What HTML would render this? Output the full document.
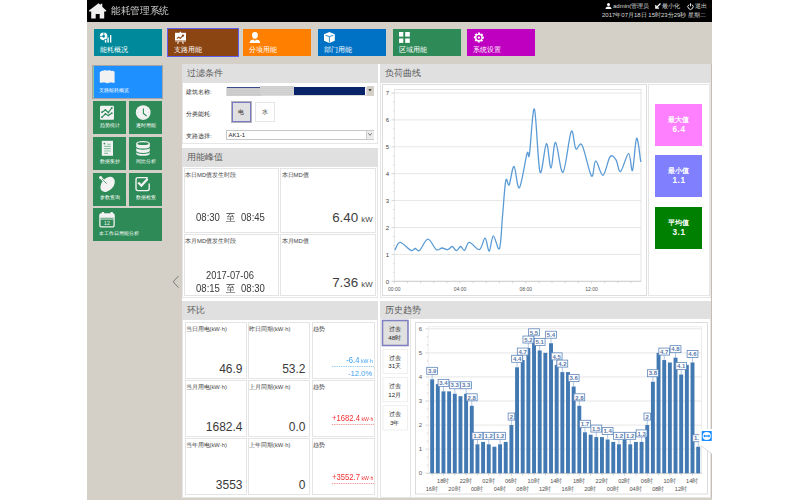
<!DOCTYPE html><html><head><meta charset="utf-8"><style>
*{margin:0;padding:0;box-sizing:border-box}
html,body{width:800px;height:500px;overflow:hidden;background:#fff}
body{font-family:"Liberation Sans",sans-serif;position:relative}
.a{position:absolute}
.t{position:absolute;white-space:nowrap;line-height:1}
.nav{position:absolute;top:29px;width:68px;height:27px}
.nav .t{color:#fff;font-size:7px;left:6px;top:17px}
.tile{position:absolute;width:33px;height:33px;background:#2e8b57}
.tile .t{color:#fff;font-size:5.3px;top:22.2px;left:6.6px}
.pan{position:absolute;background:#fff;border:1px solid #e6e6e6}
.ph{position:absolute;left:0;right:0;top:0;background:#e0e0e0;color:#555}
.ph .t{font-size:11px;left:4px;top:4px}
.card{position:absolute;border:1px solid #e4e4e4;background:#fff}
.lab{font-size:6px;color:#333}
</style></head><body>
<div class="a" style="left:87px;top:0;width:625px;height:500px;background:#d4d0c8"></div>
<div class="a" style="left:87px;top:0;width:625px;height:22px;background:#000"></div>
<svg class="a" style="left:80px;top:0" width="40" height="22" viewBox="80 0 40 22"><path d="M98.6 3.2 L100.6 5.1 V3.7 H102.3 V6.7 L106.2 10.6 Q106.6 11.6 105.6 11.6 H104.2 V18.4 H99.7 V13.9 H95.7 V18.4 H91.2 V11.6 H89.6 Q88.6 11.6 89 10.6 Z" fill="#f0f0f0"/></svg>
<div class="t" style="left:110.5px;top:6px;font-size:10px;transform:scaleX(0.965);transform-origin:0 0;color:#d0d0d0">能耗管理系统</div>
<svg class="a" style="left:605px;top:3px" width="7" height="6" viewBox="0 0 7 6"><circle cx="3.5" cy="1.6" r="1.5" fill="#fff"/><path d="M0.5 6 Q0.5 3.4 3.5 3.4 Q6.5 3.4 6.5 6Z" fill="#fff"/></svg>
<div class="t" style="left:613px;top:3px;font-size:6px;color:#ddd">admin(管理员</div>
<svg class="a" style="left:655px;top:3px" width="6" height="6" viewBox="0 0 6 6"><path d="M5.5 0.5 L1 5 M0.8 2 L0.8 5.2 L4 5.2" stroke="#fff" stroke-width="1.2" fill="none"/></svg>
<div class="t" style="left:662px;top:3px;font-size:6px;color:#ddd">最小化</div>
<svg class="a" style="left:687px;top:2.5px" width="7" height="7" viewBox="0 0 7 7"><path d="M2 1.6 A2.6 2.6 0 1 0 5 1.6" stroke="#fff" stroke-width="0.9" fill="none"/><path d="M3.5 0.3 V3.3" stroke="#fff" stroke-width="0.9"/></svg>
<div class="t" style="left:695px;top:3px;font-size:6px;color:#ddd">退出</div>
<div class="t" style="left:602px;top:11.5px;font-size:6px;color:#ddd">2017年07月18日 15时23分29秒 星期二</div>
<div class="nav" style="left:94px;background:#00899a"><div class="t">能耗概况</div></div>
<div class="a" style="left:167px;top:28px;width:72px;height:29px;border:1px solid #6060f0;background:#8b4513"></div>
<div class="nav" style="left:168px;background:#8b4513"><div class="t">支路用能</div></div>
<div class="nav" style="left:243px;background:#ff8000"><div class="t">分项用能</div></div>
<div class="nav" style="left:318px;background:#0072c6"><div class="t">部门用能</div></div>
<div class="nav" style="left:393px;background:#2e8b57"><div class="t">区域用能</div></div>
<div class="nav" style="left:467px;background:#c000c0"><div class="t">系统设置</div></div>
<svg class="a" style="left:0;top:0" width="800" height="60" viewBox="0 0 800 60"><circle cx="103.65" cy="36.3" r="2.6" stroke="#fff" stroke-width="2.5" fill="none"/><path d="M103.8 36.3 V32 M103.65 36.45 H99.4" stroke="#00899a" stroke-width="0.75"/><path d="M104.2 43 V39.3 H106.8 V36.8 H109.4 V43Z" fill="#00899a"/><rect x="104.85" y="39.9" width="1.5" height="2.7" fill="#fff"/><rect x="107.4" y="37.4" width="1.4" height="5.2" fill="#fff"/><rect x="110" y="35" width="1.3" height="7.6" fill="#fff"/><rect x="175" y="32.8" width="11" height="7.2" fill="#fff"/><path d="M179.4 32.9 L180.3 31.3 L181.3 32.9 Z" fill="#fff"/><rect x="175" y="40.3" width="11" height="1.2" fill="#fff" opacity="0.8"/><path d="M178.4 41.4 L177.7 43.8 M182.6 41.4 L183.3 43.8" stroke="#fff" stroke-width="1.2" opacity="0.85"/><path d="M176.9 38.6 L178.6 37.2 L180.3 38.3 L183 35.7" stroke="#8b4513" stroke-width="1.1" fill="none"/><circle cx="183" cy="35.6" r="1.15" fill="#8b4513"/><path d="M254.9 32 Q257.9 32 257.9 35 Q257.9 38.7 254.9 38.7 Q252 38.7 252 35 Q252 32 254.9 32Z" fill="#fff"/><path d="M249.7 43.1 Q249.7 40.2 252.6 39.8 L254.2 39.8 L254.9 41.4 L255.6 39.8 L257.2 39.8 Q260.1 40.2 260.1 43.1Z" fill="#fff"/><path d="M329.4 32 L334.8 34.2 V40.8 L329.4 42.9 L324 40.8 V34.2Z" fill="#fff"/><path d="M325.5 35.3 L329.4 36.6 L333.3 35.3 M329.4 36.6 V42.5" stroke="#0072c6" stroke-width="0.8" fill="none"/><rect x="399" y="32" width="4.3" height="4.6" fill="#fff"/><rect x="405.2" y="32" width="4.6" height="4.6" fill="#fff"/><rect x="399" y="38.5" width="4.3" height="4.4" fill="#fff"/><rect x="405.2" y="38.5" width="4.6" height="4.4" fill="#fff"/><path d="M483.90 36.59 L483.90 38.61 L482.51 39.08 L482.14 39.77 L483.15 40.42 L481.72 41.85 L480.40 41.20 L479.66 41.43 L479.91 42.60 L477.89 42.60 L477.42 41.21 L476.73 40.84 L476.08 41.85 L474.65 40.42 L475.30 39.10 L475.07 38.36 L473.90 38.61 L473.90 36.59 L475.29 36.12 L475.66 35.43 L474.65 34.78 L476.08 33.35 L477.40 34.00 L478.14 33.77 L477.89 32.60 L479.91 32.60 L480.38 33.99 L481.07 34.36 L481.72 33.35 L483.15 34.78 L482.50 36.10 L482.73 36.84Z" fill="#fff"/><circle cx="478.9" cy="37.6" r="1.85" stroke="#c000c0" stroke-width="1.3" fill="#fff"/></svg>
<div class="a" style="left:92.3px;top:64.5px;width:70.6px;height:34.8px;background:#8cc8a8;border:1px solid #a4a4a4"></div>
<div class="a" style="left:94px;top:66px;width:68px;height:32px;background:#1e90ff"></div>
<svg class="a" style="left:99.5px;top:70px" width="15" height="14" viewBox="0 0 15 14"><path d="M0.5 1.5 Q2 0.5 3.7 1 Q5.5 0 7.5 1 Q9.5 0 11.3 1 Q13 0.5 14.5 1.5 V13 Q13 12 11.3 12.6 Q9.5 12 7.5 13.3 Q5.5 12 3.7 12.6 Q2 12 0.5 13Z" fill="#eee"/></svg>
<div class="t" style="left:99px;top:88px;font-size:5.2px;color:#fff">支路能耗概览</div>
<div class="tile" style="left:93px;top:101px"><div class="t">趋势统计</div></div>
<div class="tile" style="left:129px;top:101px"><div class="t">逐时用能</div></div>
<div class="tile" style="left:93px;top:137px"><div class="t">数据集抄</div></div>
<div class="tile" style="left:129px;top:137px"><div class="t">同比分析</div></div>
<div class="tile" style="left:93px;top:173px"><div class="t">参数查询</div></div>
<div class="tile" style="left:129px;top:173px"><div class="t">数据检查</div></div>
<div class="tile" style="left:93px;top:208px;width:69px"><div class="t" style="left:6.2px;font-size:5.45px;top:22.6px">本工作日用能分析</div></div>
<svg class="a" style="left:0;top:0" width="800" height="500" viewBox="0 0 800 500"><path d="M99.8 72.2 Q102.5 70.6 104.8 70.3 Q106.5 70.2 106.9 71 L107.7 70.4 Q109.5 69.9 114.2 72.2 V82.4 L110.2 81.8 L108 82.2 L107 83.4 L106 82.2 L103.8 81.8 L99.8 82.4 Z" fill="#f2f2f2"/><rect x="100" y="105.8" width="14" height="14" rx="1" fill="#f2f2f2"/><path d="M102 112.2 L105.4 110 L108.4 112.4 L111.8 108 M102 117.2 L105.4 114 L108.4 115.4 L111.8 113.2" stroke="#2e8b57" stroke-width="1.1" fill="none"/><circle cx="102" cy="112.2" r="0.9" fill="#2e8b57"/><circle cx="105.4" cy="110" r="0.9" fill="#2e8b57"/><circle cx="108.4" cy="112.4" r="0.9" fill="#2e8b57"/><circle cx="111.8" cy="108" r="0.9" fill="#2e8b57"/><circle cx="102" cy="117.2" r="0.9" fill="#2e8b57"/><circle cx="105.4" cy="114" r="0.9" fill="#2e8b57"/><circle cx="108.4" cy="115.4" r="0.9" fill="#2e8b57"/><circle cx="111.8" cy="113.2" r="0.9" fill="#2e8b57"/><circle cx="143.2" cy="112.6" r="7.4" fill="#f2f2f2"/><path d="M143.4 108.6 V113.4 L146.6 116" stroke="#2e8b57" stroke-width="1.1" fill="none"/><path d="M137.2 112.6 h0.8 M148.4 112.6 h0.8 M143.2 118.2 v0.8" stroke="#9cc8ae" stroke-width="0.6"/><rect x="101.8" y="140.8" width="11.2" height="15" fill="#f2f2f2"/><path d="M107.2 144.2 H110.8 M104.2 146.4 H110.8 M104.2 148.6 H110.8 M104.2 151 H110.8 M104.2 153.4 H108" stroke="#8cc4a4" stroke-width="1.1"/><circle cx="104.4" cy="143.6" r="0.9" fill="#2e8b57"/><path d="M136.2 143.6 Q136.2 141 143 141 Q149.8 141 149.8 143.6 V146.2 Q149.8 148.6 143 148.6 Q136.2 148.6 136.2 146.2 Z" fill="#f2f2f2"/><ellipse cx="143" cy="143.7" rx="5.6" ry="1.4" fill="#2e8b57"/><path d="M136.2 148 Q137 149.7 143 149.7 Q149 149.7 149.8 148 V150.6 Q149.8 152.9 143 152.9 Q136.2 152.9 136.2 150.6 Z" fill="#f2f2f2"/><path d="M136.2 152.3 Q137 154 143 154 Q149 154 149.8 152.3 V153.4 Q149.8 155.7 143 155.7 Q136.2 155.7 136.2 153.4 Z" fill="#f2f2f2"/><ellipse cx="107.6" cy="184.4" rx="8.6" ry="5.9" transform="rotate(-48 107.6 184.4)" fill="#f2f2f2"/><path d="M100.6 177.6 L107.4 184.4" stroke="#f2f2f2" stroke-width="2.2" stroke-linecap="round"/><path d="M101.4 178.4 L106.8 183.8" stroke="#2e8b57" stroke-width="0.7"/><circle cx="100.6" cy="177.6" r="1.5" fill="#f2f2f2"/><path d="M147 180 V177.6 H138 Q136 177.6 136 179.6 V188.6 Q136 190.6 138 190.6 H147.2 Q149.2 190.6 149.2 188.6 V183.5" stroke="#f2f2f2" stroke-width="1.4" fill="none"/><path d="M138.2 182.5 L141.4 185.6 L147.5 179" stroke="#f2f2f2" stroke-width="2.2" fill="none"/><rect x="99.9" y="214" width="14.2" height="12.8" rx="1.2" stroke="#f2f2f2" stroke-width="1.3" fill="none"/><rect x="99.9" y="214" width="14.2" height="3.8" fill="#f2f2f2"/><rect x="100.5" y="218.6" width="13" height="0.9" fill="#f2f2f2"/><rect x="101.6" y="212" width="2.6" height="3.4" rx="1" fill="#f2f2f2"/><rect x="110.4" y="212" width="2.6" height="3.4" rx="1" fill="#f2f2f2"/><text x="107" y="224.6" font-size="5.2" fill="#f2f2f2" text-anchor="middle" font-family="Liberation Sans">12</text></svg>
<svg class="a" style="left:172px;top:274.5px" width="8" height="14" viewBox="0 0 8 14"><path d="M6.5 1 L1.2 6.8 L6.5 12.6" stroke="#707070" stroke-width="0.9" fill="none"/></svg>
<div class="a" style="left:182px;top:64px;width:529px;height:434px;background:#fff"></div>
<div class="a" style="left:711px;top:64px;width:1px;height:434px;background:#c4bdb5"></div>
<div class="pan" style="left:182px;top:64px;width:196px;height:79.5px"></div>
<div class="a" style="left:182px;top:64px;width:196px;height:18.5px;background:#e0e0e0"></div>
<div class="t" style="left:186.5px;top:69px;font-size:9px;color:#5a5a5a">过滤条件</div>
<div class="pan" style="left:182px;top:148px;width:196px;height:149.5px"></div>
<div class="a" style="left:182px;top:148px;width:196px;height:18.5px;background:#e0e0e0"></div>
<div class="t" style="left:186.5px;top:153px;font-size:9px;color:#5a5a5a">用能峰值</div>
<div class="pan" style="left:182px;top:301px;width:196px;height:197px"></div>
<div class="a" style="left:182px;top:301px;width:196px;height:18.5px;background:#e0e0e0"></div>
<div class="t" style="left:186.5px;top:306px;font-size:9px;color:#5a5a5a">环比</div>
<div class="pan" style="left:380px;top:64px;width:331px;height:233.5px"></div>
<div class="a" style="left:380px;top:64px;width:331px;height:18.5px;background:#e0e0e0"></div>
<div class="t" style="left:384.5px;top:69px;font-size:9px;color:#5a5a5a">负荷曲线</div>
<div class="pan" style="left:380px;top:301px;width:331px;height:197px"></div>
<div class="a" style="left:380px;top:301px;width:331px;height:17.5px;background:#e0e0e0"></div>
<div class="t" style="left:384.5px;top:306px;font-size:9px;color:#5a5a5a">历史趋势</div>
<div class="t lab" style="left:186px;top:88.5px">建筑名称:</div>
<div class="a" style="left:226px;top:86.5px;width:141px;height:9.5px;border:1px solid #ddd;background:#fff"></div>
<div class="a" style="left:227px;top:87.6px;width:35px;height:8.2px;background:repeating-linear-gradient(#cfcfcf 0,#c4c4c4 1px,#dadada 2px);filter:blur(0.5px)"></div>
<div class="a" style="left:227px;top:86.8px;width:33px;height:0.8px;background:#3a4a8a"></div>
<div class="a" style="left:260px;top:86.3px;width:34px;height:8.4px;background:repeating-linear-gradient(#d6d6d6 0,#c8c8c8 1px,#dedede 2px);filter:blur(0.5px)"></div>
<div class="a" style="left:294px;top:87px;width:71.2px;height:7.5px;background:#0a246a"></div>
<div class="a" style="left:366.8px;top:85.8px;width:7px;height:9.8px;background:#d4d0c8"></div>
<svg class="a" style="left:368.3px;top:89.4px" width="4" height="3" viewBox="0 0 4 3"><path d="M0.3 0.3 H3.7 L2 2.3Z" fill="#222"/></svg>
<div class="t lab" style="left:186px;top:110.5px">分类能耗:</div>
<div class="a" style="left:230.5px;top:101px;width:21px;height:21.5px;background:#e0e0e0;border:1px solid #b4b4b4;box-shadow:inset 0 0 0 1px #7a7ac8"></div>
<div class="t" style="left:238px;top:108.5px;font-size:6px;color:#333">电</div>
<div class="a" style="left:255px;top:102px;width:20px;height:20px;background:#fff;border:1px solid #e6e6e6"></div>
<div class="t" style="left:262px;top:108.5px;font-size:6px;color:#333">水</div>
<div class="t lab" style="left:186px;top:132.5px">支路选择:</div>
<div class="a" style="left:226px;top:130px;width:148px;height:9.5px;border:1px solid #c8c8c8;background:#fff"></div>
<div class="t" style="left:228.5px;top:132px;font-size:6px;color:#222">AK1-1</div>
<div class="a" style="left:365.5px;top:130.5px;width:8px;height:8.5px;background:#ececec;border-left:1px solid #ccc"></div>
<svg class="a" style="left:367.5px;top:133px" width="4" height="3" viewBox="0 0 4 3"><path d="M0.3 0.3 L2 2.3 L3.7 0.3" stroke="#444" stroke-width="0.7" fill="none"/></svg>
<div class="card" style="left:183.5px;top:167.5px;width:95px;height:65px"></div>
<div class="card" style="left:280px;top:167.5px;width:96px;height:65px"></div>
<div class="card" style="left:183.5px;top:234px;width:95px;height:61.5px"></div>
<div class="card" style="left:280px;top:234px;width:96px;height:61.5px"></div>
<div class="t" style="left:185px;top:172.8px;font-size:5.9px;color:#444">本日MD值发生时段</div>
<div class="t" style="left:281.5px;top:172.8px;font-size:5.9px;color:#444">本日MD值</div>
<div class="t" style="left:185px;top:239.3px;font-size:5.9px;color:#444">本月MD值发生时段</div>
<div class="t" style="left:281.5px;top:239.3px;font-size:5.9px;color:#444">本月MD值</div>
<div class="t" style="left:196.3px;top:213.2px;font-size:10.4px;color:#383838;transform:scaleX(0.92);transform-origin:0 0">08:30</div>
<div class="t" style="left:226.3px;top:213.2px;font-size:10.4px;color:#383838;transform:scaleX(0.92);transform-origin:0 0">至</div>
<div class="t" style="left:241.3px;top:213.2px;font-size:10.4px;color:#383838;transform:scaleX(0.92);transform-origin:0 0">08:45</div>
<div class="t" style="left:205.5px;top:270.6px;font-size:10.4px;color:#383838;transform:scaleX(0.9);transform-origin:0 0">2017-07-06</div>
<div class="t" style="left:196.3px;top:284px;font-size:10.4px;color:#383838;transform:scaleX(0.92);transform-origin:0 0">08:15</div>
<div class="t" style="left:226.3px;top:284px;font-size:10.4px;color:#383838;transform:scaleX(0.92);transform-origin:0 0">至</div>
<div class="t" style="left:241.3px;top:284px;font-size:10.4px;color:#383838;transform:scaleX(0.92);transform-origin:0 0">08:30</div>
<div class="t" style="right:427.5px;top:211px;font-size:13.4px;color:#404040">6.40<span style="font-size:7.8px;margin-left:3px">kW</span></div>
<div class="t" style="right:427.5px;top:276px;font-size:13.4px;color:#404040">7.36<span style="font-size:7.8px;margin-left:3px">kW</span></div>
<div class="card" style="left:184.5px;top:321.5px;width:62.5px;height:57px"></div>
<div class="t" style="left:185.5px;top:326.8px;font-size:5.8px;color:#444">当日用电(kW·h)</div>
<div class="card" style="left:248px;top:321.5px;width:62px;height:57px"></div>
<div class="t" style="left:249px;top:326.8px;font-size:5.8px;color:#444">昨日同期(kW·h)</div>
<div class="card" style="left:312px;top:321.5px;width:62.5px;height:57px"></div>
<div class="t" style="left:313px;top:326.8px;font-size:5.8px;color:#444">趋势</div>
<div class="t" style="right:557.5px;top:362.8px;font-size:12px;color:#3a3a3a">46.9</div>
<div class="t" style="right:494.5px;top:362.8px;font-size:12px;color:#3a3a3a">53.2</div>
<div class="card" style="left:184.5px;top:380px;width:62.5px;height:57px"></div>
<div class="t" style="left:185.5px;top:385.3px;font-size:5.8px;color:#444">当月用电(kW·h)</div>
<div class="card" style="left:248px;top:380px;width:62px;height:57px"></div>
<div class="t" style="left:249px;top:385.3px;font-size:5.8px;color:#444">上月同期(kW·h)</div>
<div class="card" style="left:312px;top:380px;width:62.5px;height:57px"></div>
<div class="t" style="left:313px;top:385.3px;font-size:5.8px;color:#444">趋势</div>
<div class="t" style="right:557.5px;top:421.3px;font-size:12px;color:#3a3a3a">1682.4</div>
<div class="t" style="right:494.5px;top:421.3px;font-size:12px;color:#3a3a3a">0.0</div>
<div class="card" style="left:184.5px;top:438px;width:62.5px;height:57px"></div>
<div class="t" style="left:185.5px;top:443.3px;font-size:5.8px;color:#444">当年用电(kW·h)</div>
<div class="card" style="left:248px;top:438px;width:62px;height:57px"></div>
<div class="t" style="left:249px;top:443.3px;font-size:5.8px;color:#444">上年同期(kW·h)</div>
<div class="card" style="left:312px;top:438px;width:62.5px;height:57px"></div>
<div class="t" style="left:313px;top:443.3px;font-size:5.8px;color:#444">趋势</div>
<div class="t" style="right:557.5px;top:479.3px;font-size:12px;color:#3a3a3a">3553</div>
<div class="t" style="right:494.5px;top:479.3px;font-size:12px;color:#3a3a3a">0</div>
<div class="t" style="right:427px;top:355.6px;font-size:8.6px;color:#3ca0f0;transform:scaleX(0.89);transform-origin:100% 0">-6.4<span style="font-size:5.8px;margin-left:1.6px">kW·h</span></div>
<svg class="a" style="left:330px;top:365.1px" width="46" height="3"><path d="M1.8 1.5 H44" stroke="#7cc0f0" stroke-width="0.8" stroke-dasharray="1.4 0.9"/></svg>
<div class="t" style="right:428px;top:369.5px;font-size:7.6px;color:#3ca0f0">-12.0%</div>
<div class="t" style="right:427px;top:414px;font-size:8.6px;color:#f03030;transform:scaleX(0.89);transform-origin:100% 0">+1682.4<span style="font-size:5.8px;margin-left:1.6px">kW·h</span></div>
<svg class="a" style="left:330px;top:422.9px" width="46" height="3"><path d="M1.8 1.5 H44" stroke="#f08080" stroke-width="0.8" stroke-dasharray="1.4 0.9"/></svg>
<div class="t" style="right:427px;top:472.6px;font-size:8.6px;color:#f03030;transform:scaleX(0.89);transform-origin:100% 0">+3552.7<span style="font-size:5.8px;margin-left:1.6px">kW·h</span></div>
<svg class="a" style="left:330px;top:481.9px" width="46" height="3"><path d="M1.8 1.5 H44" stroke="#f08080" stroke-width="0.8" stroke-dasharray="1.4 0.9"/></svg>
<div class="a" style="left:381.5px;top:84px;width:265px;height:211.5px;border:1px solid #ddd"></div>
<div class="a" style="left:648px;top:83.5px;width:61.5px;height:212px;border:1px solid #e6e6e6"></div>
<div class="a" style="left:655px;top:104px;width:47px;height:41.5px;background:#ff80ff"></div>
<div class="t" style="left:655px;width:47px;text-align:center;top:116px;font-size:7.2px;color:#fff;font-weight:bold">最大值</div>
<div class="t" style="left:655.5px;width:47px;text-align:center;top:126.3px;font-size:8.2px;color:#fff;font-weight:bold;letter-spacing:0.6px">6.4</div>
<div class="a" style="left:655px;top:155px;width:47px;height:41.5px;background:#8080ff"></div>
<div class="t" style="left:655px;width:47px;text-align:center;top:167px;font-size:7.2px;color:#fff;font-weight:bold">最小值</div>
<div class="t" style="left:655.5px;width:47px;text-align:center;top:177.3px;font-size:8.2px;color:#fff;font-weight:bold;letter-spacing:0.6px">1.1</div>
<div class="a" style="left:655px;top:207px;width:47px;height:41.5px;background:#008000"></div>
<div class="t" style="left:655px;width:47px;text-align:center;top:219px;font-size:7.2px;color:#fff;font-weight:bold">平均值</div>
<div class="t" style="left:655.5px;width:47px;text-align:center;top:229.3px;font-size:8.2px;color:#fff;font-weight:bold;letter-spacing:0.6px">3.1</div>
<svg class="a" style="left:0;top:0" width="800" height="500" viewBox="0 0 800 500"><path d="M394.3 254.4 H641" stroke="#e6e6e6" stroke-width="1"/><path d="M394.3 227.5 H641" stroke="#e6e6e6" stroke-width="1"/><path d="M394.3 200.6 H641" stroke="#e6e6e6" stroke-width="1"/><path d="M394.3 173.7 H641" stroke="#e6e6e6" stroke-width="1"/><path d="M394.3 146.8 H641" stroke="#e6e6e6" stroke-width="1"/><path d="M394.3 119.9 H641" stroke="#e6e6e6" stroke-width="1"/><path d="M394.3 93.0 H641" stroke="#e6e6e6" stroke-width="1"/><rect x="394.3" y="89.5" width="246.7" height="191.8" fill="none" stroke="#dedede" stroke-width="0.8"/><path d="M394.3 281.3 H641" stroke="#c8c8c8" stroke-width="0.8" fill="none"/><path d="M391.5 281.3 H394.3" stroke="#bbb" stroke-width="0.6"/><text x="387.5" y="283.5" font-size="6" fill="#444" text-anchor="middle" font-family="Liberation Sans">0</text><path d="M393.2 272.33 H394.3" stroke="#c8c8c8" stroke-width="0.8"/><path d="M393.2 263.37 H394.3" stroke="#c8c8c8" stroke-width="0.8"/><path d="M391.5 254.4 H394.3" stroke="#bbb" stroke-width="0.6"/><text x="387.5" y="256.6" font-size="6" fill="#444" text-anchor="middle" font-family="Liberation Sans">1</text><path d="M393.2 245.43 H394.3" stroke="#c8c8c8" stroke-width="0.8"/><path d="M393.2 236.47 H394.3" stroke="#c8c8c8" stroke-width="0.8"/><path d="M391.5 227.5 H394.3" stroke="#bbb" stroke-width="0.6"/><text x="387.5" y="229.7" font-size="6" fill="#444" text-anchor="middle" font-family="Liberation Sans">2</text><path d="M393.2 218.53 H394.3" stroke="#c8c8c8" stroke-width="0.8"/><path d="M393.2 209.57 H394.3" stroke="#c8c8c8" stroke-width="0.8"/><path d="M391.5 200.6 H394.3" stroke="#bbb" stroke-width="0.6"/><text x="387.5" y="202.8" font-size="6" fill="#444" text-anchor="middle" font-family="Liberation Sans">3</text><path d="M393.2 191.63 H394.3" stroke="#c8c8c8" stroke-width="0.8"/><path d="M393.2 182.67 H394.3" stroke="#c8c8c8" stroke-width="0.8"/><path d="M391.5 173.7 H394.3" stroke="#bbb" stroke-width="0.6"/><text x="387.5" y="175.9" font-size="6" fill="#444" text-anchor="middle" font-family="Liberation Sans">4</text><path d="M393.2 164.73 H394.3" stroke="#c8c8c8" stroke-width="0.8"/><path d="M393.2 155.77 H394.3" stroke="#c8c8c8" stroke-width="0.8"/><path d="M391.5 146.8 H394.3" stroke="#bbb" stroke-width="0.6"/><text x="387.5" y="149.0" font-size="6" fill="#444" text-anchor="middle" font-family="Liberation Sans">5</text><path d="M393.2 137.83 H394.3" stroke="#c8c8c8" stroke-width="0.8"/><path d="M393.2 128.87 H394.3" stroke="#c8c8c8" stroke-width="0.8"/><path d="M391.5 119.9 H394.3" stroke="#bbb" stroke-width="0.6"/><text x="387.5" y="122.1" font-size="6" fill="#444" text-anchor="middle" font-family="Liberation Sans">6</text><path d="M393.2 110.93 H394.3" stroke="#c8c8c8" stroke-width="0.8"/><path d="M393.2 101.97 H394.3" stroke="#c8c8c8" stroke-width="0.8"/><path d="M391.5 93.0 H394.3" stroke="#bbb" stroke-width="0.6"/><text x="387.5" y="95.2" font-size="6" fill="#444" text-anchor="middle" font-family="Liberation Sans">7</text><path d="M394.30 281.3 V283.3" stroke="#c0c0c0" stroke-width="0.6"/><path d="M407.44 281.3 V283.3" stroke="#c0c0c0" stroke-width="0.6"/><path d="M420.59 281.3 V283.3" stroke="#c0c0c0" stroke-width="0.6"/><path d="M433.73 281.3 V283.3" stroke="#c0c0c0" stroke-width="0.6"/><path d="M446.88 281.3 V283.3" stroke="#c0c0c0" stroke-width="0.6"/><path d="M460.02 281.3 V283.3" stroke="#c0c0c0" stroke-width="0.6"/><path d="M473.16 281.3 V283.3" stroke="#c0c0c0" stroke-width="0.6"/><path d="M486.31 281.3 V283.3" stroke="#c0c0c0" stroke-width="0.6"/><path d="M499.45 281.3 V283.3" stroke="#c0c0c0" stroke-width="0.6"/><path d="M512.60 281.3 V283.3" stroke="#c0c0c0" stroke-width="0.6"/><path d="M525.74 281.3 V283.3" stroke="#c0c0c0" stroke-width="0.6"/><path d="M538.88 281.3 V283.3" stroke="#c0c0c0" stroke-width="0.6"/><path d="M552.03 281.3 V283.3" stroke="#c0c0c0" stroke-width="0.6"/><path d="M565.17 281.3 V283.3" stroke="#c0c0c0" stroke-width="0.6"/><path d="M578.32 281.3 V283.3" stroke="#c0c0c0" stroke-width="0.6"/><path d="M591.46 281.3 V283.3" stroke="#c0c0c0" stroke-width="0.6"/><path d="M604.60 281.3 V283.3" stroke="#c0c0c0" stroke-width="0.6"/><path d="M617.75 281.3 V283.3" stroke="#c0c0c0" stroke-width="0.6"/><path d="M630.89 281.3 V283.3" stroke="#c0c0c0" stroke-width="0.6"/><text x="394.3" y="291" font-size="5" fill="#555" text-anchor="middle" font-family="Liberation Sans">00:00</text><text x="460.0" y="291" font-size="5" fill="#555" text-anchor="middle" font-family="Liberation Sans">04:00</text><text x="525.7" y="291" font-size="5" fill="#555" text-anchor="middle" font-family="Liberation Sans">08:00</text><text x="591.5" y="291" font-size="5" fill="#555" text-anchor="middle" font-family="Liberation Sans">12:00</text><path d="M394.90 250.10 C395.77 248.82 397.40 242.35 400.10 242.40 C402.80 242.45 408.58 249.38 411.10 250.40 C413.62 251.42 413.78 248.50 415.20 248.50 C416.62 248.50 417.48 251.95 419.60 250.40 C421.72 248.85 425.12 239.33 427.90 239.20 C430.68 239.07 433.95 248.13 436.30 249.60 C438.65 251.07 440.10 248.00 442.00 248.00 C443.90 248.00 445.98 249.85 447.70 249.60 C449.42 249.35 450.87 246.33 452.30 246.50 C453.73 246.67 454.90 250.60 456.30 250.60 C457.70 250.60 459.33 246.53 460.70 246.50 C462.07 246.47 463.07 251.08 464.50 250.40 C465.93 249.72 466.82 242.53 469.30 242.40 C471.78 242.27 476.77 250.30 479.40 249.60 C482.03 248.90 483.47 237.93 485.10 238.20 C486.73 238.47 487.83 251.60 489.20 251.20 C490.57 250.80 491.58 236.23 493.30 235.80 C495.02 235.37 497.95 252.07 499.50 248.60 C501.05 245.13 501.55 226.35 502.60 215.00 C503.65 203.65 504.70 185.53 505.80 180.50 C506.90 175.47 507.83 187.15 509.20 184.80 C510.57 182.45 512.30 165.90 514.00 166.40 C515.70 166.90 517.23 189.93 519.40 187.80 C521.57 185.67 525.33 159.17 527.00 153.60 C528.67 148.03 528.17 161.83 529.40 154.40 C530.63 146.97 532.63 106.07 534.40 109.00 C536.17 111.93 538.00 166.23 540.00 172.00 C542.00 177.77 544.57 144.27 546.40 143.60 C548.23 142.93 549.47 168.20 551.00 168.00 C552.53 167.80 553.60 141.68 555.60 142.40 C557.60 143.12 560.40 174.12 563.00 172.30 C565.60 170.48 569.07 135.43 571.20 131.50 C573.33 127.57 573.98 146.42 575.80 148.70 C577.62 150.98 579.48 140.65 582.10 145.20 C584.72 149.75 589.23 173.38 591.50 176.00 C593.77 178.62 593.78 161.02 595.70 160.90 C597.62 160.78 600.60 176.00 603.00 175.30 C605.40 174.60 607.93 159.27 610.10 156.70 C612.27 154.13 614.25 157.43 616.00 159.90 C617.75 162.37 618.50 172.60 620.60 171.50 C622.70 170.40 626.62 153.48 628.60 153.30 C630.58 153.12 631.17 172.92 632.50 170.40 C633.83 167.88 635.22 139.60 636.60 138.20 C637.98 136.80 640.10 158.03 640.80 162.00" stroke="#5b9bd5" stroke-width="1.3" fill="none"/><rect x="382.5" y="320.5" width="25.5" height="25" fill="#e0e0e0" stroke="#8080c0" stroke-width="1.6"/><rect x="383" y="349.3" width="24.5" height="24.3" fill="#fff" stroke="#ececec" stroke-width="0.8"/><rect x="383" y="377.5" width="24.5" height="24.3" fill="#fff" stroke="#ececec" stroke-width="0.8"/><rect x="383" y="405.7" width="24.5" height="24.3" fill="#fff" stroke="#ececec" stroke-width="0.8"/><path d="M410.5 319 V497.5" stroke="#e4e4e4" stroke-width="1"/><rect x="415.5" y="322.6" width="292" height="171.4" fill="none" stroke="#d4d4d4" stroke-width="0.8"/><path d="M428 449.1 H701.6" stroke="#e6e6e6" stroke-width="1"/><path d="M428 425.1 H701.6" stroke="#e6e6e6" stroke-width="1"/><path d="M428 401.0 H701.6" stroke="#e6e6e6" stroke-width="1"/><path d="M428 376.9 H701.6" stroke="#e6e6e6" stroke-width="1"/><path d="M428 352.9 H701.6" stroke="#e6e6e6" stroke-width="1"/><path d="M428 328.8 H701.6" stroke="#e6e6e6" stroke-width="1"/><rect x="428.2" y="326.8" width="273.4" height="146.4" fill="none" stroke="#e8e8e8" stroke-width="0.8"/><path d="M428.2 473.3 H701.6" stroke="#c8c8c8" stroke-width="0.8" fill="none"/><path d="M425.5 473.2 H428" stroke="#bbb" stroke-width="0.6"/><text x="420.5" y="475.4" font-size="6" fill="#555" text-anchor="middle" font-family="Liberation Sans">0</text><path d="M426.8 465.18 H428.2" stroke="#c8c8c8" stroke-width="0.8"/><path d="M426.8 457.15 H428.2" stroke="#c8c8c8" stroke-width="0.8"/><path d="M425.5 449.1 H428" stroke="#bbb" stroke-width="0.6"/><text x="420.5" y="451.3" font-size="6" fill="#555" text-anchor="middle" font-family="Liberation Sans">1</text><path d="M426.8 441.11 H428.2" stroke="#c8c8c8" stroke-width="0.8"/><path d="M426.8 433.08 H428.2" stroke="#c8c8c8" stroke-width="0.8"/><path d="M425.5 425.1 H428" stroke="#bbb" stroke-width="0.6"/><text x="420.5" y="427.3" font-size="6" fill="#555" text-anchor="middle" font-family="Liberation Sans">2</text><path d="M426.8 417.04 H428.2" stroke="#c8c8c8" stroke-width="0.8"/><path d="M426.8 409.01 H428.2" stroke="#c8c8c8" stroke-width="0.8"/><path d="M425.5 401.0 H428" stroke="#bbb" stroke-width="0.6"/><text x="420.5" y="403.2" font-size="6" fill="#555" text-anchor="middle" font-family="Liberation Sans">3</text><path d="M426.8 392.97 H428.2" stroke="#c8c8c8" stroke-width="0.8"/><path d="M426.8 384.94 H428.2" stroke="#c8c8c8" stroke-width="0.8"/><path d="M425.5 376.9 H428" stroke="#bbb" stroke-width="0.6"/><text x="420.5" y="379.1" font-size="6" fill="#555" text-anchor="middle" font-family="Liberation Sans">4</text><path d="M426.8 368.90 H428.2" stroke="#c8c8c8" stroke-width="0.8"/><path d="M426.8 360.87 H428.2" stroke="#c8c8c8" stroke-width="0.8"/><path d="M425.5 352.9 H428" stroke="#bbb" stroke-width="0.6"/><text x="420.5" y="355.1" font-size="6" fill="#555" text-anchor="middle" font-family="Liberation Sans">5</text><path d="M426.8 344.83 H428.2" stroke="#c8c8c8" stroke-width="0.8"/><path d="M426.8 336.80 H428.2" stroke="#c8c8c8" stroke-width="0.8"/><path d="M425.5 328.8 H428" stroke="#bbb" stroke-width="0.6"/><text x="420.5" y="331.0" font-size="6" fill="#555" text-anchor="middle" font-family="Liberation Sans">6</text><rect x="430.20" y="379.33" width="3.90" height="93.87" fill="#4279b2"/><path d="M432.15 473.2 V475.5" stroke="#b0b0b0" stroke-width="0.6"/><rect x="435.86" y="384.14" width="3.90" height="89.06" fill="#4279b2"/><path d="M437.81 473.2 V474.5" stroke="#b0b0b0" stroke-width="0.6"/><rect x="441.52" y="391.36" width="3.90" height="81.84" fill="#4279b2"/><path d="M443.47 473.2 V475.5" stroke="#b0b0b0" stroke-width="0.6"/><rect x="447.18" y="391.36" width="3.90" height="81.84" fill="#4279b2"/><path d="M449.13 473.2 V474.5" stroke="#b0b0b0" stroke-width="0.6"/><rect x="452.84" y="393.77" width="3.90" height="79.43" fill="#4279b2"/><path d="M454.79 473.2 V475.5" stroke="#b0b0b0" stroke-width="0.6"/><rect x="458.50" y="396.18" width="3.90" height="77.02" fill="#4279b2"/><path d="M460.45 473.2 V474.5" stroke="#b0b0b0" stroke-width="0.6"/><rect x="464.16" y="393.77" width="3.90" height="79.43" fill="#4279b2"/><path d="M466.11 473.2 V475.5" stroke="#b0b0b0" stroke-width="0.6"/><rect x="469.82" y="405.80" width="3.90" height="67.40" fill="#4279b2"/><path d="M471.77 473.2 V474.5" stroke="#b0b0b0" stroke-width="0.6"/><rect x="475.48" y="444.32" width="3.90" height="28.88" fill="#4279b2"/><path d="M477.43 473.2 V475.5" stroke="#b0b0b0" stroke-width="0.6"/><rect x="481.14" y="441.91" width="3.90" height="31.29" fill="#4279b2"/><path d="M483.09 473.2 V474.5" stroke="#b0b0b0" stroke-width="0.6"/><rect x="486.80" y="444.32" width="3.90" height="28.88" fill="#4279b2"/><path d="M488.75 473.2 V475.5" stroke="#b0b0b0" stroke-width="0.6"/><rect x="492.46" y="446.72" width="3.90" height="26.48" fill="#4279b2"/><path d="M494.41 473.2 V474.5" stroke="#b0b0b0" stroke-width="0.6"/><rect x="498.12" y="444.32" width="3.90" height="28.88" fill="#4279b2"/><path d="M500.07 473.2 V475.5" stroke="#b0b0b0" stroke-width="0.6"/><rect x="503.78" y="441.91" width="3.90" height="31.29" fill="#4279b2"/><path d="M505.73 473.2 V474.5" stroke="#b0b0b0" stroke-width="0.6"/><rect x="509.44" y="425.06" width="3.90" height="48.14" fill="#4279b2"/><path d="M511.39 473.2 V475.5" stroke="#b0b0b0" stroke-width="0.6"/><rect x="515.10" y="367.29" width="3.90" height="105.91" fill="#4279b2"/><path d="M517.05 473.2 V474.5" stroke="#b0b0b0" stroke-width="0.6"/><rect x="520.76" y="360.07" width="3.90" height="113.13" fill="#4279b2"/><path d="M522.71 473.2 V475.5" stroke="#b0b0b0" stroke-width="0.6"/><rect x="526.42" y="348.04" width="3.90" height="125.16" fill="#4279b2"/><path d="M528.37 473.2 V474.5" stroke="#b0b0b0" stroke-width="0.6"/><rect x="532.08" y="340.81" width="3.90" height="132.38" fill="#4279b2"/><path d="M534.03 473.2 V475.5" stroke="#b0b0b0" stroke-width="0.6"/><rect x="537.74" y="350.44" width="3.90" height="122.76" fill="#4279b2"/><path d="M539.69 473.2 V474.5" stroke="#b0b0b0" stroke-width="0.6"/><rect x="543.40" y="352.85" width="3.90" height="120.35" fill="#4279b2"/><path d="M545.35 473.2 V475.5" stroke="#b0b0b0" stroke-width="0.6"/><rect x="549.06" y="343.22" width="3.90" height="129.98" fill="#4279b2"/><path d="M551.01 473.2 V474.5" stroke="#b0b0b0" stroke-width="0.6"/><rect x="554.72" y="364.88" width="3.90" height="108.31" fill="#4279b2"/><path d="M556.67 473.2 V475.5" stroke="#b0b0b0" stroke-width="0.6"/><rect x="560.38" y="372.11" width="3.90" height="101.09" fill="#4279b2"/><path d="M562.33 473.2 V474.5" stroke="#b0b0b0" stroke-width="0.6"/><rect x="566.04" y="372.11" width="3.90" height="101.09" fill="#4279b2"/><path d="M567.99 473.2 V475.5" stroke="#b0b0b0" stroke-width="0.6"/><rect x="571.70" y="386.55" width="3.90" height="86.65" fill="#4279b2"/><path d="M573.65 473.2 V474.5" stroke="#b0b0b0" stroke-width="0.6"/><rect x="577.36" y="405.80" width="3.90" height="67.40" fill="#4279b2"/><path d="M579.31 473.2 V475.5" stroke="#b0b0b0" stroke-width="0.6"/><rect x="583.02" y="432.28" width="3.90" height="40.92" fill="#4279b2"/><path d="M584.97 473.2 V474.5" stroke="#b0b0b0" stroke-width="0.6"/><rect x="588.68" y="434.69" width="3.90" height="38.51" fill="#4279b2"/><path d="M590.63 473.2 V475.5" stroke="#b0b0b0" stroke-width="0.6"/><rect x="594.34" y="437.09" width="3.90" height="36.11" fill="#4279b2"/><path d="M596.29 473.2 V474.5" stroke="#b0b0b0" stroke-width="0.6"/><rect x="600.00" y="437.09" width="3.90" height="36.11" fill="#4279b2"/><path d="M601.95 473.2 V475.5" stroke="#b0b0b0" stroke-width="0.6"/><rect x="605.66" y="439.50" width="3.90" height="33.70" fill="#4279b2"/><path d="M607.61 473.2 V474.5" stroke="#b0b0b0" stroke-width="0.6"/><rect x="611.32" y="441.91" width="3.90" height="31.29" fill="#4279b2"/><path d="M613.27 473.2 V475.5" stroke="#b0b0b0" stroke-width="0.6"/><rect x="616.98" y="444.32" width="3.90" height="28.88" fill="#4279b2"/><path d="M618.93 473.2 V474.5" stroke="#b0b0b0" stroke-width="0.6"/><rect x="622.64" y="439.50" width="3.90" height="33.70" fill="#4279b2"/><path d="M624.59 473.2 V475.5" stroke="#b0b0b0" stroke-width="0.6"/><rect x="628.30" y="444.32" width="3.90" height="28.88" fill="#4279b2"/><path d="M630.25 473.2 V474.5" stroke="#b0b0b0" stroke-width="0.6"/><rect x="633.96" y="441.91" width="3.90" height="31.29" fill="#4279b2"/><path d="M635.91 473.2 V475.5" stroke="#b0b0b0" stroke-width="0.6"/><rect x="639.62" y="441.91" width="3.90" height="31.29" fill="#4279b2"/><path d="M641.57 473.2 V474.5" stroke="#b0b0b0" stroke-width="0.6"/><rect x="645.28" y="425.06" width="3.90" height="48.14" fill="#4279b2"/><path d="M647.23 473.2 V475.5" stroke="#b0b0b0" stroke-width="0.6"/><rect x="650.94" y="381.73" width="3.90" height="91.47" fill="#4279b2"/><path d="M652.89 473.2 V474.5" stroke="#b0b0b0" stroke-width="0.6"/><rect x="656.60" y="352.85" width="3.90" height="120.35" fill="#4279b2"/><path d="M658.55 473.2 V475.5" stroke="#b0b0b0" stroke-width="0.6"/><rect x="662.26" y="360.07" width="3.90" height="113.13" fill="#4279b2"/><path d="M664.21 473.2 V474.5" stroke="#b0b0b0" stroke-width="0.6"/><rect x="667.92" y="362.48" width="3.90" height="110.72" fill="#4279b2"/><path d="M669.87 473.2 V475.5" stroke="#b0b0b0" stroke-width="0.6"/><rect x="673.58" y="357.66" width="3.90" height="115.54" fill="#4279b2"/><path d="M675.53 473.2 V474.5" stroke="#b0b0b0" stroke-width="0.6"/><rect x="679.24" y="374.51" width="3.90" height="98.69" fill="#4279b2"/><path d="M681.19 473.2 V475.5" stroke="#b0b0b0" stroke-width="0.6"/><rect x="684.90" y="364.88" width="3.90" height="108.31" fill="#4279b2"/><path d="M686.85 473.2 V474.5" stroke="#b0b0b0" stroke-width="0.6"/><rect x="690.56" y="362.48" width="3.90" height="110.72" fill="#4279b2"/><path d="M692.51 473.2 V475.5" stroke="#b0b0b0" stroke-width="0.6"/><rect x="696.22" y="446.72" width="3.90" height="26.48" fill="#4279b2"/><path d="M698.17 473.2 V474.5" stroke="#b0b0b0" stroke-width="0.6"/><path d="M432.15 374.33 V379.33" stroke="#6a8fc0" stroke-width="0.5"/><rect x="426.75" y="367.33" width="10.80" height="7" fill="#fff" stroke="#5f86bb" stroke-width="0.8"/><text x="432.15" y="373.03" font-size="6" fill="#5a78a8" font-weight="bold" text-anchor="middle" font-family="Liberation Sans">3.9</text><path d="M443.47 386.36 V391.36" stroke="#6a8fc0" stroke-width="0.5"/><rect x="438.07" y="379.36" width="10.80" height="7" fill="#fff" stroke="#5f86bb" stroke-width="0.8"/><text x="443.47" y="385.06" font-size="6" fill="#5a78a8" font-weight="bold" text-anchor="middle" font-family="Liberation Sans">3.4</text><path d="M454.79 388.77 V393.77" stroke="#6a8fc0" stroke-width="0.5"/><rect x="449.39" y="381.77" width="10.80" height="7" fill="#fff" stroke="#5f86bb" stroke-width="0.8"/><text x="454.79" y="387.47" font-size="6" fill="#5a78a8" font-weight="bold" text-anchor="middle" font-family="Liberation Sans">3.3</text><path d="M466.11 388.77 V393.77" stroke="#6a8fc0" stroke-width="0.5"/><rect x="460.71" y="381.77" width="10.80" height="7" fill="#fff" stroke="#5f86bb" stroke-width="0.8"/><text x="466.11" y="387.47" font-size="6" fill="#5a78a8" font-weight="bold" text-anchor="middle" font-family="Liberation Sans">3.3</text><path d="M471.77 400.80 V405.80" stroke="#6a8fc0" stroke-width="0.5"/><rect x="466.37" y="393.80" width="10.80" height="7" fill="#fff" stroke="#5f86bb" stroke-width="0.8"/><text x="471.77" y="399.50" font-size="6" fill="#5a78a8" font-weight="bold" text-anchor="middle" font-family="Liberation Sans">2.8</text><path d="M477.43 439.32 V444.32" stroke="#6a8fc0" stroke-width="0.5"/><rect x="472.03" y="432.32" width="10.80" height="7" fill="#fff" stroke="#5f86bb" stroke-width="0.8"/><text x="477.43" y="438.02" font-size="6" fill="#5a78a8" font-weight="bold" text-anchor="middle" font-family="Liberation Sans">1.2</text><path d="M488.75 439.32 V444.32" stroke="#6a8fc0" stroke-width="0.5"/><rect x="483.35" y="432.32" width="10.80" height="7" fill="#fff" stroke="#5f86bb" stroke-width="0.8"/><text x="488.75" y="438.02" font-size="6" fill="#5a78a8" font-weight="bold" text-anchor="middle" font-family="Liberation Sans">1.2</text><path d="M500.07 439.32 V444.32" stroke="#6a8fc0" stroke-width="0.5"/><rect x="494.67" y="432.32" width="10.80" height="7" fill="#fff" stroke="#5f86bb" stroke-width="0.8"/><text x="500.07" y="438.02" font-size="6" fill="#5a78a8" font-weight="bold" text-anchor="middle" font-family="Liberation Sans">1.2</text><path d="M511.39 420.06 V425.06" stroke="#6a8fc0" stroke-width="0.5"/><rect x="508.14" y="413.06" width="6.50" height="7" fill="#fff" stroke="#5f86bb" stroke-width="0.8"/><text x="511.39" y="418.76" font-size="6" fill="#5a78a8" font-weight="bold" text-anchor="middle" font-family="Liberation Sans">2</text><path d="M517.05 362.29 V367.29" stroke="#6a8fc0" stroke-width="0.5"/><rect x="511.65" y="355.29" width="10.80" height="7" fill="#fff" stroke="#5f86bb" stroke-width="0.8"/><text x="517.05" y="360.99" font-size="6" fill="#5a78a8" font-weight="bold" text-anchor="middle" font-family="Liberation Sans">4.4</text><path d="M522.71 355.07 V360.07" stroke="#6a8fc0" stroke-width="0.5"/><rect x="517.31" y="348.07" width="10.80" height="7" fill="#fff" stroke="#5f86bb" stroke-width="0.8"/><text x="522.71" y="353.77" font-size="6" fill="#5a78a8" font-weight="bold" text-anchor="middle" font-family="Liberation Sans">4.7</text><path d="M528.37 343.04 V348.04" stroke="#6a8fc0" stroke-width="0.5"/><rect x="522.97" y="336.04" width="10.80" height="7" fill="#fff" stroke="#5f86bb" stroke-width="0.8"/><text x="528.37" y="341.74" font-size="6" fill="#5a78a8" font-weight="bold" text-anchor="middle" font-family="Liberation Sans">5.2</text><path d="M534.03 335.81 V340.81" stroke="#6a8fc0" stroke-width="0.5"/><rect x="528.63" y="328.81" width="10.80" height="7" fill="#fff" stroke="#5f86bb" stroke-width="0.8"/><text x="534.03" y="334.51" font-size="6" fill="#5a78a8" font-weight="bold" text-anchor="middle" font-family="Liberation Sans">5.5</text><path d="M539.69 345.44 V350.44" stroke="#6a8fc0" stroke-width="0.5"/><rect x="534.29" y="338.44" width="10.80" height="7" fill="#fff" stroke="#5f86bb" stroke-width="0.8"/><text x="539.69" y="344.14" font-size="6" fill="#5a78a8" font-weight="bold" text-anchor="middle" font-family="Liberation Sans">5.1</text><path d="M551.01 338.22 V343.22" stroke="#6a8fc0" stroke-width="0.5"/><rect x="545.61" y="331.22" width="10.80" height="7" fill="#fff" stroke="#5f86bb" stroke-width="0.8"/><text x="551.01" y="336.92" font-size="6" fill="#5a78a8" font-weight="bold" text-anchor="middle" font-family="Liberation Sans">5.4</text><path d="M556.67 359.88 V364.88" stroke="#6a8fc0" stroke-width="0.5"/><rect x="551.27" y="352.88" width="10.80" height="7" fill="#fff" stroke="#5f86bb" stroke-width="0.8"/><text x="556.67" y="358.58" font-size="6" fill="#5a78a8" font-weight="bold" text-anchor="middle" font-family="Liberation Sans">4.5</text><path d="M562.33 367.11 V372.11" stroke="#6a8fc0" stroke-width="0.5"/><rect x="556.93" y="360.11" width="10.80" height="7" fill="#fff" stroke="#5f86bb" stroke-width="0.8"/><text x="562.33" y="365.81" font-size="6" fill="#5a78a8" font-weight="bold" text-anchor="middle" font-family="Liberation Sans">4.2</text><path d="M573.65 381.55 V386.55" stroke="#6a8fc0" stroke-width="0.5"/><rect x="568.25" y="374.55" width="10.80" height="7" fill="#fff" stroke="#5f86bb" stroke-width="0.8"/><text x="573.65" y="380.25" font-size="6" fill="#5a78a8" font-weight="bold" text-anchor="middle" font-family="Liberation Sans">3.6</text><path d="M579.31 400.80 V405.80" stroke="#6a8fc0" stroke-width="0.5"/><rect x="573.91" y="393.80" width="10.80" height="7" fill="#fff" stroke="#5f86bb" stroke-width="0.8"/><text x="579.31" y="399.50" font-size="6" fill="#5a78a8" font-weight="bold" text-anchor="middle" font-family="Liberation Sans">2.8</text><path d="M584.97 427.28 V432.28" stroke="#6a8fc0" stroke-width="0.5"/><rect x="579.57" y="420.28" width="10.80" height="7" fill="#fff" stroke="#5f86bb" stroke-width="0.8"/><text x="584.97" y="425.98" font-size="6" fill="#5a78a8" font-weight="bold" text-anchor="middle" font-family="Liberation Sans">1.7</text><path d="M596.29 432.09 V437.09" stroke="#6a8fc0" stroke-width="0.5"/><rect x="590.89" y="425.09" width="10.80" height="7" fill="#fff" stroke="#5f86bb" stroke-width="0.8"/><text x="596.29" y="430.79" font-size="6" fill="#5a78a8" font-weight="bold" text-anchor="middle" font-family="Liberation Sans">1.5</text><path d="M607.61 434.50 V439.50" stroke="#6a8fc0" stroke-width="0.5"/><rect x="602.21" y="427.50" width="10.80" height="7" fill="#fff" stroke="#5f86bb" stroke-width="0.8"/><text x="607.61" y="433.20" font-size="6" fill="#5a78a8" font-weight="bold" text-anchor="middle" font-family="Liberation Sans">1.4</text><path d="M618.93 439.32 V444.32" stroke="#6a8fc0" stroke-width="0.5"/><rect x="613.53" y="432.32" width="10.80" height="7" fill="#fff" stroke="#5f86bb" stroke-width="0.8"/><text x="618.93" y="438.02" font-size="6" fill="#5a78a8" font-weight="bold" text-anchor="middle" font-family="Liberation Sans">1.2</text><path d="M630.25 439.32 V444.32" stroke="#6a8fc0" stroke-width="0.5"/><rect x="624.85" y="432.32" width="10.80" height="7" fill="#fff" stroke="#5f86bb" stroke-width="0.8"/><text x="630.25" y="438.02" font-size="6" fill="#5a78a8" font-weight="bold" text-anchor="middle" font-family="Liberation Sans">1.2</text><path d="M641.57 436.91 V441.91" stroke="#6a8fc0" stroke-width="0.5"/><rect x="636.17" y="429.91" width="10.80" height="7" fill="#fff" stroke="#5f86bb" stroke-width="0.8"/><text x="641.57" y="435.61" font-size="6" fill="#5a78a8" font-weight="bold" text-anchor="middle" font-family="Liberation Sans">1.3</text><path d="M647.23 420.06 V425.06" stroke="#6a8fc0" stroke-width="0.5"/><rect x="643.98" y="413.06" width="6.50" height="7" fill="#fff" stroke="#5f86bb" stroke-width="0.8"/><text x="647.23" y="418.76" font-size="6" fill="#5a78a8" font-weight="bold" text-anchor="middle" font-family="Liberation Sans">2</text><path d="M652.89 376.73 V381.73" stroke="#6a8fc0" stroke-width="0.5"/><rect x="647.49" y="369.73" width="10.80" height="7" fill="#fff" stroke="#5f86bb" stroke-width="0.8"/><text x="652.89" y="375.43" font-size="6" fill="#5a78a8" font-weight="bold" text-anchor="middle" font-family="Liberation Sans">3.8</text><path d="M664.21 355.07 V360.07" stroke="#6a8fc0" stroke-width="0.5"/><rect x="658.81" y="348.07" width="10.80" height="7" fill="#fff" stroke="#5f86bb" stroke-width="0.8"/><text x="664.21" y="353.77" font-size="6" fill="#5a78a8" font-weight="bold" text-anchor="middle" font-family="Liberation Sans">4.7</text><path d="M675.53 352.66 V357.66" stroke="#6a8fc0" stroke-width="0.5"/><rect x="670.13" y="345.66" width="10.80" height="7" fill="#fff" stroke="#5f86bb" stroke-width="0.8"/><text x="675.53" y="351.36" font-size="6" fill="#5a78a8" font-weight="bold" text-anchor="middle" font-family="Liberation Sans">4.8</text><path d="M681.19 369.51 V374.51" stroke="#6a8fc0" stroke-width="0.5"/><rect x="675.79" y="362.51" width="10.80" height="7" fill="#fff" stroke="#5f86bb" stroke-width="0.8"/><text x="681.19" y="368.21" font-size="6" fill="#5a78a8" font-weight="bold" text-anchor="middle" font-family="Liberation Sans">4.1</text><path d="M692.51 357.48 V362.48" stroke="#6a8fc0" stroke-width="0.5"/><rect x="687.11" y="350.48" width="10.80" height="7" fill="#fff" stroke="#5f86bb" stroke-width="0.8"/><text x="692.51" y="356.18" font-size="6" fill="#5a78a8" font-weight="bold" text-anchor="middle" font-family="Liberation Sans">4.6</text><path d="M698.17 441.72 V446.72" stroke="#6a8fc0" stroke-width="0.5"/><rect x="692.77" y="434.72" width="10.80" height="7" fill="#fff" stroke="#5f86bb" stroke-width="0.8"/><text x="698.17" y="440.42" font-size="6" fill="#5a78a8" font-weight="bold" text-anchor="middle" font-family="Liberation Sans">1.1</text><text x="431.85" y="490.50" font-size="5.6" fill="#505050" text-anchor="middle" font-family="Liberation Sans">16时</text><text x="443.17" y="483.10" font-size="5.6" fill="#505050" text-anchor="middle" font-family="Liberation Sans">18时</text><text x="454.49" y="490.50" font-size="5.6" fill="#505050" text-anchor="middle" font-family="Liberation Sans">20时</text><text x="465.81" y="483.10" font-size="5.6" fill="#505050" text-anchor="middle" font-family="Liberation Sans">22时</text><text x="477.13" y="490.50" font-size="5.6" fill="#505050" text-anchor="middle" font-family="Liberation Sans">00时</text><text x="488.45" y="483.10" font-size="5.6" fill="#505050" text-anchor="middle" font-family="Liberation Sans">02时</text><text x="499.77" y="490.50" font-size="5.6" fill="#505050" text-anchor="middle" font-family="Liberation Sans">04时</text><text x="511.09" y="483.10" font-size="5.6" fill="#505050" text-anchor="middle" font-family="Liberation Sans">06时</text><text x="522.41" y="490.50" font-size="5.6" fill="#505050" text-anchor="middle" font-family="Liberation Sans">08时</text><text x="533.73" y="483.10" font-size="5.6" fill="#505050" text-anchor="middle" font-family="Liberation Sans">10时</text><text x="545.05" y="490.50" font-size="5.6" fill="#505050" text-anchor="middle" font-family="Liberation Sans">12时</text><text x="556.37" y="483.10" font-size="5.6" fill="#505050" text-anchor="middle" font-family="Liberation Sans">14时</text><text x="567.69" y="490.50" font-size="5.6" fill="#505050" text-anchor="middle" font-family="Liberation Sans">16时</text><text x="579.01" y="483.10" font-size="5.6" fill="#505050" text-anchor="middle" font-family="Liberation Sans">18时</text><text x="590.33" y="490.50" font-size="5.6" fill="#505050" text-anchor="middle" font-family="Liberation Sans">20时</text><text x="601.65" y="483.10" font-size="5.6" fill="#505050" text-anchor="middle" font-family="Liberation Sans">22时</text><text x="612.97" y="490.50" font-size="5.6" fill="#505050" text-anchor="middle" font-family="Liberation Sans">00时</text><text x="624.29" y="483.10" font-size="5.6" fill="#505050" text-anchor="middle" font-family="Liberation Sans">02时</text><text x="635.61" y="490.50" font-size="5.6" fill="#505050" text-anchor="middle" font-family="Liberation Sans">04时</text><text x="646.93" y="483.10" font-size="5.6" fill="#505050" text-anchor="middle" font-family="Liberation Sans">06时</text><text x="658.25" y="490.50" font-size="5.6" fill="#505050" text-anchor="middle" font-family="Liberation Sans">08时</text><text x="669.57" y="483.10" font-size="5.6" fill="#505050" text-anchor="middle" font-family="Liberation Sans">10时</text><text x="680.89" y="490.50" font-size="5.6" fill="#505050" text-anchor="middle" font-family="Liberation Sans">12时</text><text x="692.21" y="483.10" font-size="5.6" fill="#505050" text-anchor="middle" font-family="Liberation Sans">14时</text></svg>
<div class="t" style="left:382.2px;width:25px;text-align:center;top:325.1px;font-size:6.2px;color:#222;line-height:8.5px">过去<br>48时</div>
<div class="t" style="left:382.2px;width:25px;text-align:center;top:353.90000000000003px;font-size:6.2px;color:#222;line-height:8.5px">过去<br>31天</div>
<div class="t" style="left:382.2px;width:25px;text-align:center;top:382.1px;font-size:6.2px;color:#222;line-height:8.5px">过去<br>12月</div>
<div class="t" style="left:382.2px;width:25px;text-align:center;top:410.3px;font-size:6.2px;color:#222;line-height:8.5px">过去<br>3年</div>
<svg class="a" style="left:690px;top:420px" width="24" height="40" viewBox="690 420 24 40"><path d="M699.2 429 H712 V454 L699.2 444.5Z" fill="#fff"/><path d="M699.5 444.8 L711.8 453.8" stroke="#c8c8c8" stroke-width="0.6"/><rect x="701.7" y="431" width="10.1" height="10" rx="0.8" fill="#1a8cff"/><circle cx="706.75" cy="436" r="4.1" fill="#fff"/><path d="M704 436 H709.5" stroke="#1a8cff" stroke-width="1.3"/><path d="M703.2 436 L705 434.6 V437.4Z M710.3 436 L708.5 434.6 V437.4Z" fill="#1a8cff"/></svg>
</body></html>
